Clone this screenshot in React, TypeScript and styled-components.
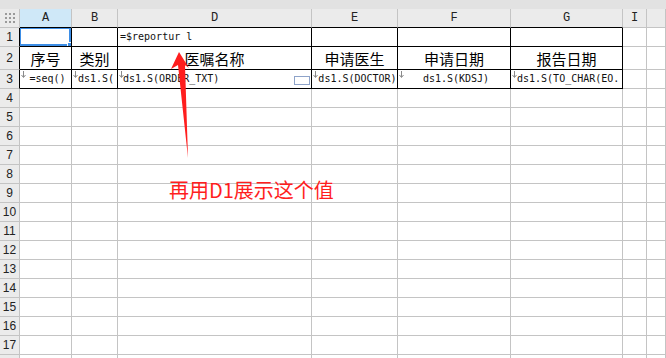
import * as React from 'react';
import styled, { createGlobalStyle } from 'styled-components';

const Color = {
  grid: '#c4c4c4',
  dark: '#000000',
  header: '#ebebeb',
  strip: '#e2e2e2',
  selectedHeader: '#cfe8f8',
  selection: '#3d8ee6',
  note: '#ff1e1e',
};

const COLUMNS = [
  { key: 'A', width: 52 },
  { key: 'B', width: 46 },
  { key: 'D', width: 194 },
  { key: 'E', width: 86 },
  { key: 'F', width: 113 },
  { key: 'G', width: 112 },
  { key: 'I', width: 24 },
  { key: '', width: 0 },
];

const TABLE_COLUMNS = 6;
// rows 4..17 are numbered, the 18th only peeks in at the bottom edge
const EMPTY_ROWS = Array.from({ length: 15 }, (_, i) => i + 4);

const TITLES = ['序号', '类别', '医嘱名称', '申请医生', '申请日期', '报告日期'];

type Formula = { text: string; align: 'left' | 'center'; pad: number; box?: boolean };

const FORMULAS: Formula[] = [
  { text: '=seq()', align: 'center', pad: 4 },
  { text: 'ds1.S(', align: 'left', pad: 6 },
  { text: 'ds1.S(ORDER_TXT)', align: 'left', pad: 5, box: true },
  { text: 'ds1.S(DOCTOR)', align: 'center', pad: 6 },
  { text: 'ds1.S(KDSJ)', align: 'center', pad: 4 },
  { text: 'ds1.S(TO_CHAR(EO.', align: 'left', pad: 6 },
];

const GlobalStyle = createGlobalStyle`
  html, body {
    margin: 0;
    padding: 0;
    background: #ffffff;
    overflow: hidden;
  }
  * {
    box-sizing: border-box;
  }
`;

const S = {
  Page: styled.div`
    position: relative;
    width: 666px;
    height: 358px;
    overflow: hidden;
    display: flex;
    flex-direction: column;
    font-family: 'Liberation Sans', 'Noto Sans CJK SC', sans-serif;
  `,
  TopStrip: styled.div`
    flex: 0 0 9px;
    background: ${Color.strip};
  `,
  Sheet: styled.div`
    display: grid;
    grid-template-columns: 20px ${COLUMNS.slice(0, -1)
        .map((c) => `${c.width}px`)
        .join(' ')} 1fr;
    grid-template-rows: 19px 19px 23px 19px;
    grid-auto-rows: 19px;
  `,
  Cell: styled.div<{ $right?: boolean; $bottom?: boolean }>`
    position: relative;
    border-right: 1px solid ${({ $right }) => ($right ? Color.dark : Color.grid)};
    border-bottom: 1px solid ${({ $bottom }) => ($bottom ? Color.dark : Color.grid)};
    display: flex;
    align-items: center;
    min-width: 0;
    overflow: hidden;
    white-space: nowrap;
  `,
  Corner: styled.div`
    background: ${Color.header};
    border-right: 1px solid ${Color.grid};
    border-bottom: 1px solid ${Color.grid};
    display: flex;
    align-items: center;
    justify-content: center;
  `,
  ColumnHeader: styled.div<{ $selected?: boolean; $bottom?: boolean }>`
    background: ${({ $selected }) => ($selected ? Color.selectedHeader : Color.header)};
    border-right: 1px solid ${Color.grid};
    border-bottom: 1px solid ${({ $bottom }) => ($bottom ? Color.dark : Color.grid)};
    display: flex;
    align-items: center;
    justify-content: center;
    font-family: 'Liberation Mono', monospace;
    font-size: 12px;
    color: #222;
  `,
  RowHeader: styled.div<{ $right?: boolean }>`
    background: ${Color.header};
    border-right: 1px solid ${({ $right }) => ($right ? Color.dark : Color.grid)};
    border-bottom: 1px solid ${Color.grid};
    display: flex;
    align-items: center;
    justify-content: center;
    font-family: 'Liberation Sans', sans-serif;
    font-size: 12px;
    color: #222;
  `,
  Title: styled.span`
    flex: 1;
    text-align: center;
    font-family: 'Noto Sans CJK SC', sans-serif;
    font-size: 15px;
    font-weight: 400;
    line-height: 1;
    color: #000;
  `,
  Formula: styled.span<{ $align: 'left' | 'center'; $pad: number }>`
    flex: 1;
    text-align: ${({ $align }) => $align};
    padding-left: ${({ $pad }) => $pad}px;
    font-family: 'DejaVu Sans Mono', monospace;
    font-size: 10px;
    line-height: 1;
    color: #111;
  `,
  Marker: styled.svg`
    position: absolute;
    left: 1px;
    top: 1px;
  `,
  ExpandBox: styled.span`
    position: absolute;
    right: 1px;
    top: 6px;
    width: 16px;
    height: 9px;
    border: 1px solid #8ea3c9;
    background: #fff;
  `,
  Selection: styled.div`
    position: absolute;
    inset: -1px 0 0 -1px;
    border: 2px solid ${Color.selection};
  `,
  Handle: styled.span`
    position: absolute;
    right: -3px;
    bottom: -3px;
    width: 5px;
    height: 5px;
    background: ${Color.selection};
    border: 1px solid #fff;
  `,
  Arrow: styled.svg`
    position: absolute;
    left: 0;
    top: 0;
    pointer-events: none;
  `,
  Note: styled.div`
    position: absolute;
    left: 169px;
    top: 178px;
    font-family: 'Noto Sans CJK SC', sans-serif;
    font-size: 20px;
    line-height: 24px;
    color: ${Color.note};
    white-space: nowrap;
  `,
};

const DotsIcon = () => (
  <svg width="12" height="10" viewBox="0 0 12 10">
    {[0, 1, 2].map((r) =>
      [0, 1, 2].map((c) => (
        <rect key={`${r}-${c}`} x={c * 4 + 1} y={r * 4} width="2" height="2" fill="#9a9a9a" />
      ))
    )}
  </svg>
);

const DownMarker = () => (
  <S.Marker width="5" height="7" viewBox="0 0 5 7">
    <path d="M2.5 0 V6 M0.5 4 L2.5 6.5 L4.5 4" stroke="#8a8a8a" strokeWidth="1" fill="none" />
  </S.Marker>
);

const App = () => {
  const inTable = (i: number) => i < TABLE_COLUMNS;

  return (
    <>
      <GlobalStyle />
      <S.Page>
        <S.TopStrip />
        <S.Sheet>
          <S.Corner>
            <DotsIcon />
          </S.Corner>
          {COLUMNS.map((c, i) => (
            <S.ColumnHeader key={`h-${i}`} $selected={c.key === 'A'} $bottom={inTable(i)}>
              {c.key}
            </S.ColumnHeader>
          ))}

          <S.RowHeader $right>1</S.RowHeader>
          {COLUMNS.map((c, i) => (
            <S.Cell key={`r1-${i}`} $right={inTable(i)} $bottom={inTable(i)}>
              {c.key === 'A' && (
                <S.Selection>
                  <S.Handle />
                </S.Selection>
              )}
              {c.key === 'D' && (
                <S.Formula $align="left" $pad={2}>
                  =$reportur l
                </S.Formula>
              )}
            </S.Cell>
          ))}

          <S.RowHeader $right>2</S.RowHeader>
          {COLUMNS.map((c, i) => (
            <S.Cell key={`r2-${i}`} $right={inTable(i)} $bottom={inTable(i)}>
              {inTable(i) && <S.Title>{TITLES[i]}</S.Title>}
            </S.Cell>
          ))}

          <S.RowHeader $right>3</S.RowHeader>
          {COLUMNS.map((c, i) => {
            const f = FORMULAS[i];
            return (
              <S.Cell key={`r3-${i}`} $right={inTable(i)} $bottom={inTable(i)}>
                {f && (
                  <>
                    <DownMarker />
                    <S.Formula $align={f.align} $pad={f.pad}>
                      {f.text}
                    </S.Formula>
                    {f.box && <S.ExpandBox />}
                  </>
                )}
              </S.Cell>
            );
          })}

          {EMPTY_ROWS.map((row) => (
            <React.Fragment key={row}>
              <S.RowHeader>{row < 18 ? row : ''}</S.RowHeader>
              {COLUMNS.map((c, i) => (
                <S.Cell key={`r${row}-${i}`} />
              ))}
            </React.Fragment>
          ))}
        </S.Sheet>

        <S.Arrow width="666" height="358" viewBox="0 0 666 358">
          <polygon
            points="179,52 171,69 178,65 188,158 185,65 189,68"
            fill={Color.note}
          />
        </S.Arrow>
        <S.Note>再用D1展示这个值</S.Note>
      </S.Page>
    </>
  );
};

export default App;
